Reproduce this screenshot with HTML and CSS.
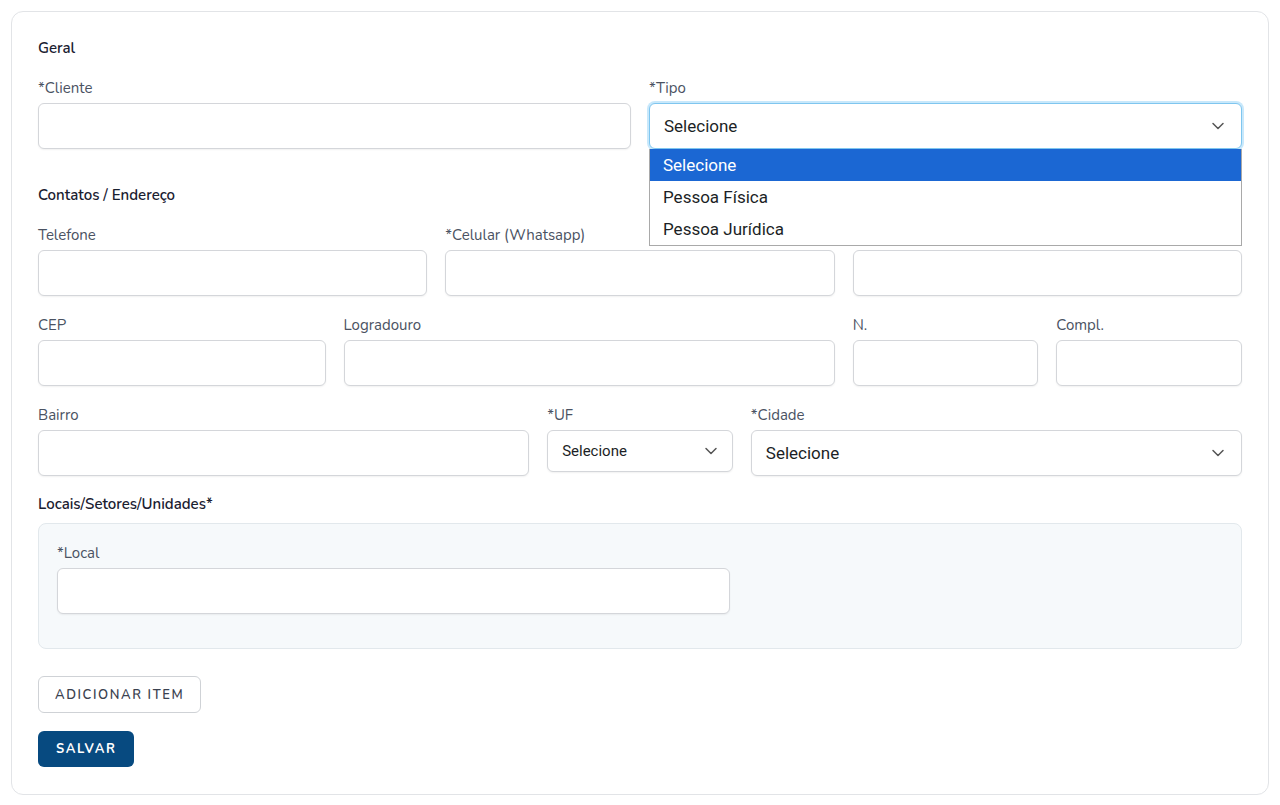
FILE: index.html
```html
<!DOCTYPE html>
<html>
<head>
    <title>Cadastro de Cliente</title>
    <link rel="stylesheet" href="styles.css">
</head>
<body>
    <form class="card">
        <h4 class="section-title">Geral</h4>
        <div class="row">
            <div class="field span-6">
                <label>*Cliente</label>
                <input type="text" class="input">
            </div>
            <div class="field span-6">
                <label>*Tipo</label>
                <div class="select-wrap">
                    <div class="select select-lg focused">
                        <span>Selecione</span>
                        <svg class="chevron" width="14" height="14" viewBox="0 0 14 14"><path d="M2 4.5l5 5 5-5" fill="none" stroke="#555" stroke-width="1.5" stroke-linecap="round" stroke-linejoin="round"/></svg>
                    </div>
                    <ul class="options">
                        <li class="active">Selecione</li>
                        <li>Pessoa Física</li>
                        <li>Pessoa Jurídica</li>
                    </ul>
                </div>
            </div>
        </div>

        <h4 class="section-title">Contatos / Endereço</h4>
        <div class="row">
            <div class="field span-4">
                <label>Telefone</label>
                <input type="text" class="input">
            </div>
            <div class="field span-4">
                <label>*Celular (Whatsapp)</label>
                <input type="text" class="input">
            </div>
            <div class="field span-4">
                <label>E-mail</label>
                <input type="text" class="input">
            </div>
        </div>
        <div class="row">
            <div class="field span-3">
                <label>CEP</label>
                <input type="text" class="input">
            </div>
            <div class="field span-5">
                <label>Logradouro</label>
                <input type="text" class="input">
            </div>
            <div class="field span-2">
                <label>N.</label>
                <input type="text" class="input">
            </div>
            <div class="field span-2">
                <label>Compl.</label>
                <input type="text" class="input">
            </div>
        </div>
        <div class="row">
            <div class="field span-5">
                <label>Bairro</label>
                <input type="text" class="input">
            </div>
            <div class="field span-2">
                <label>*UF</label>
                <div class="select select-sm">
                    <span>Selecione</span>
                    <svg class="chevron" width="14" height="14" viewBox="0 0 14 14"><path d="M2 4.5l5 5 5-5" fill="none" stroke="#555" stroke-width="1.5" stroke-linecap="round" stroke-linejoin="round"/></svg>
                </div>
            </div>
            <div class="field span-5">
                <label>*Cidade</label>
                <div class="select select-lg">
                    <span>Selecione</span>
                    <svg class="chevron" width="14" height="14" viewBox="0 0 14 14"><path d="M2 4.5l5 5 5-5" fill="none" stroke="#555" stroke-width="1.5" stroke-linecap="round" stroke-linejoin="round"/></svg>
                </div>
            </div>
        </div>

        <h4 class="section-title title-tight">Locais/Setores/Unidades*</h4>
        <div class="items-box">
            <div class="row">
                <div class="field span-7">
                    <label>*Local</label>
                    <input type="text" class="input">
                </div>
            </div>
        </div>

        <div class="actions">
            <button type="button" class="btn btn-outline">Adicionar item</button>
            <button type="button" class="btn btn-primary">Salvar</button>
        </div>
    </form>
</body>
</html>
```

FILE: styles.css
```css
* {
    margin: 0;
    padding: 0;
    box-sizing: border-box;
}

body {
    font-family: Nunito, Lato, "Noto Sans", sans-serif;
    background-color: #ffffff;
    color: #1f2633;
    padding: 11px;
}

.card {
    border: 1px solid #e2e4e7;
    border-radius: 12px;
    padding: 25px 26px 27px 26px;
}

.section-title {
    font-size: 15px;
    font-weight: 600;
    color: #1a2030;
    line-height: 22px;
    margin-bottom: 19px;
}

.row + .section-title {
    margin-top: 35px;
}

.row + .section-title.title-tight {
    margin-top: 17px;
    margin-bottom: 8px;
}

.row {
    display: grid;
    grid-template-columns: repeat(12, 1fr);
    column-gap: 18px;
}

.row + .row {
    margin-top: 19px;
}

.span-2 { grid-column: span 2; }
.span-3 { grid-column: span 3; }
.span-4 { grid-column: span 4; }
.span-5 { grid-column: span 5; }
.span-6 { grid-column: span 6; }
.span-7 { grid-column: span 7; }

.field {
    display: flex;
    flex-direction: column;
}

.field label {
    font-size: 15px;
    color: #4a5262;
    line-height: 20px;
    margin-bottom: 5px;
}

.input {
    height: 46px;
    border: 1px solid #d4d6da;
    border-radius: 6px;
    background: #fff;
    box-shadow: 0 1px 2px rgba(0, 0, 0, 0.06);
    outline: none;
    font: inherit;
}

.select {
    height: 46px;
    border: 1px solid #d4d6da;
    border-radius: 6px;
    background: #fff;
    box-shadow: 0 1px 2px rgba(0, 0, 0, 0.06);
    display: flex;
    align-items: center;
    justify-content: space-between;
    padding: 0 16px 0 14px;
    color: #1c1f26;
    font-family: Roboto, "Noto Sans", sans-serif;
}

.select-lg {
    font-size: 17px;
}

.select-sm {
    height: 42px;
    font-size: 15px;
    padding-right: 14px;
}

.select.focused {
    border-color: #7fc6ef;
    box-shadow: 0 0 0 2px #c8e8fb;
}

.select-wrap {
    position: relative;
}

/* open list of the Tipo select */
.options {
    position: absolute;
    left: 0;
    right: 0;
    top: 100%;
    list-style: none;
    background: #fff;
    border: 1px solid #a9a9a9;
    border-top: none;
    font-family: Roboto, "Noto Sans", sans-serif;
    font-size: 17px;
    color: #1c1f26;
    z-index: 2;
}

.options li {
    height: 32px;
    line-height: 32px;
    padding-left: 13px;
}

.options li.active {
    background: #1b67d3;
    color: #fff;
}

.items-box {
    background: #f6f9fb;
    border: 1px solid #e2e8ec;
    border-radius: 8px;
    padding: 19px 18px 34px 18px;
}

.actions {
    display: flex;
    flex-direction: column;
    align-items: flex-start;
    gap: 18px;
    margin-top: 27px;
}

.btn {
    font-family: inherit;
    font-size: 13px;
    text-transform: uppercase;
    letter-spacing: 1.6px;
    border-radius: 6px;
    cursor: pointer;
}

.btn-outline {
    height: 37px;
    padding: 0 16px;
    background: #fff;
    border: 1px solid #cfd2d6;
    color: #3b4250;
    font-weight: 600;
}

.btn-primary {
    height: 36px;
    padding: 0 18px;
    background: #074a80;
    border: none;
    color: #fff;
    font-weight: 700;
}
```
